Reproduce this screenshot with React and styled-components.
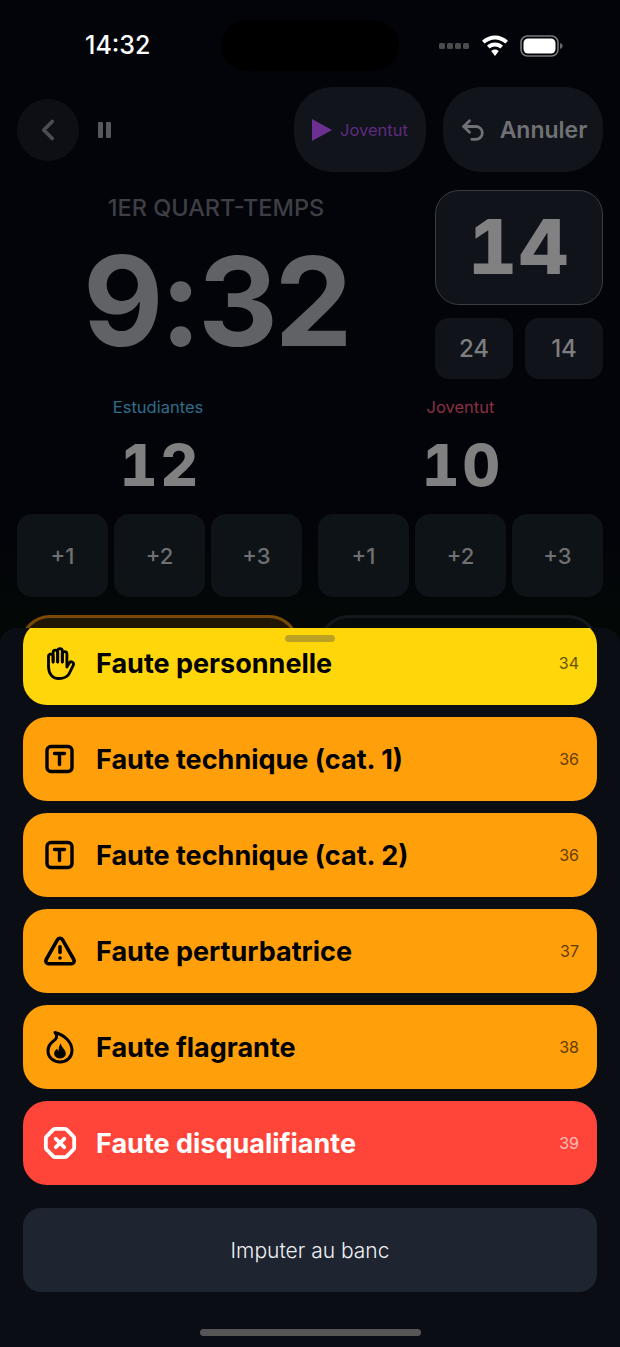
import React from "react";
import styled, { createGlobalStyle } from "styled-components";
import { ChevronLeft, OctagonX, TriangleAlert, Undo2 } from "lucide-react";

const GlobalStyle = createGlobalStyle`
  html, body { margin: 0; padding: 0; background: #030409; }
  * { box-sizing: border-box; }
`;

const Screen = styled.div`
  position: relative;
  width: 620px;
  height: 1347px;
  overflow: hidden;
  font-family: Inter, "Liberation Sans", sans-serif;
  background: linear-gradient(180deg, #030409 0, #030409 540px, #030806 628px);
`;

const StatusBar = styled.div`
  display: flex;
  align-items: center;
  height: 51px;
  margin-top: 20px;
  padding: 0 57px 0 85px;
`;

const Time = styled.div`
  width: 136px;
  color: #fff;
  font-size: 25px;
  font-weight: 500;
  line-height: 51px;
`;

const Island = styled.div`
  width: 178px;
  height: 51px;
  border-radius: 26px;
  background: #000;
`;

const StatusIcons = styled.div`
  display: flex;
  align-items: center;
  margin-left: auto;
  gap: 11px;
`;

const Toolbar = styled.div`
  display: flex;
  align-items: center;
  height: 85px;
  margin-top: 16px;
  padding: 0 17px;
`;

const BackButton = styled.div`
  display: flex;
  align-items: center;
  justify-content: center;
  width: 62px;
  height: 62px;
  border-radius: 50%;
  background: #0d0f14;
  color: #4a4d53;
`;

const PauseIcon = styled.div`
  display: flex;
  gap: 3px;
  margin-left: 19px;
  margin-right: auto;
`;

const PauseBar = styled.span`
  width: 5px;
  height: 16px;
  border-radius: 1px;
  background: #55585e;
`;

const Pill = styled.div`
  display: flex;
  align-items: center;
  justify-content: center;
  gap: ${(p) => p.$gap}px;
  width: ${(p) => p.$width}px;
  height: 85px;
  margin-left: ${(p) => p.$left}px;
  border-radius: 38px;
  background: #11141b;
  color: ${(p) => p.$color};
  font-size: ${(p) => p.$size}px;
  font-weight: ${(p) => p.$weight};
`;

const ClockRow = styled.div`
  display: flex;
  margin-top: 18px;
  padding: 0 17px;
`;

const ClockColumn = styled.div`
  flex: 1;
  display: flex;
  flex-direction: column;
  align-items: center;
  padding-right: 20px;
`;

const Period = styled.div`
  margin-top: 4px;
  color: #3d3f45;
  font-size: 23.5px;
  font-weight: 500;
  line-height: 28px;
`;

const Clock = styled.div`
  margin-top: 16px;
  color: #606265;
  font-size: 124px;
  font-weight: 700;
  line-height: 126px;
  letter-spacing: -3.5px;
`;

const ShotColumn = styled.div`
  display: flex;
  flex-direction: column;
  gap: 13px;
  width: 168px;
`;

const ShotBox = styled.div`
  display: flex;
  align-items: center;
  justify-content: center;
  height: 115px;
  padding-bottom: 4px;
  border: 1.5px solid #3a3c42;
  border-radius: 24px;
  background: #10131a;
  color: #818181;
  font-size: 76px;
  font-weight: 800;
  font-variant-numeric: tabular-nums;
  letter-spacing: 2px;
`;

const ShotPresets = styled.div`
  display: flex;
  gap: 12px;
`;

const Preset = styled.div`
  flex: 1;
  display: flex;
  align-items: center;
  justify-content: center;
  height: 61px;
  border-radius: 14px;
  background: #10131a;
  color: #7d7e80;
  font-size: 24px;
  font-weight: 500;
`;

const Teams = styled.div`
  display: grid;
  grid-template-columns: 285px 285px;
  justify-content: space-between;
  margin-top: 17px;
  padding: 0 17px;
`;

const Team = styled.div`
  display: flex;
  flex-direction: column;
`;

const TeamName = styled.div`
  height: 22px;
  padding-right: ${(p) => p.$shift}px;
  color: ${(p) => p.$color};
  font-size: 16.5px;
  line-height: 22px;
  text-align: center;
`;

const Score = styled.div`
  margin-top: 14px;
  padding-left: ${(p) => p.$nudge}px;
  color: #808080;
  font-size: 58px;
  font-weight: 800;
  font-variant-numeric: tabular-nums;
  letter-spacing: 3px;
  line-height: 66px;
  text-align: center;
`;

const ScoreButtons = styled.div`
  display: grid;
  grid-template-columns: repeat(3, 1fr);
  gap: 6px;
  margin-top: 16px;
`;

const ScoreButton = styled.div`
  display: flex;
  align-items: center;
  justify-content: center;
  height: 83px;
  border-radius: 15px;
  background: #0e1317;
  color: #6e7072;
  font-size: 22px;
  font-weight: 500;
`;

const FoulCards = styled.div`
  display: grid;
  grid-template-columns: 279px 279px;
  justify-content: space-between;
  margin-top: 18px;
  padding: 0 22px 0 20px;
`;

const FoulCard = styled.div`
  height: 90px;
  border: 3px solid ${(p) => p.$border};
  border-radius: 30px;
  background: ${(p) => p.$bg};
`;

const Sheet = styled.div`
  position: absolute;
  left: 0;
  right: 0;
  bottom: 0;
  height: 719px;
  overflow: hidden;
  border-radius: 16px 16px 0 0;
  background: #0b0d14;
`;

const Handle = styled.div`
  position: absolute;
  top: 7px;
  left: 285px;
  width: 50px;
  height: 7px;
  border-radius: 4px;
  background: rgba(80, 80, 80, 0.38);
`;

const FaultList = styled.div`
  display: flex;
  flex-direction: column;
  gap: 12px;
  margin-top: -7px;
  padding: 0 23px;
`;

const Fault = styled.div`
  display: flex;
  align-items: center;
  height: 84px;
  padding: 0 18px 0 20px;
  border-radius: 24px;
  background: ${(p) => p.$bg};
  color: ${(p) => p.$fg};
`;

const FaultIcon = styled.div`
  display: flex;
  align-items: center;
  justify-content: center;
  width: 34px;
  height: 34px;
  margin-right: 19px;
`;

const FaultLabel = styled.div`
  flex: 1;
  font-size: 27px;
  font-weight: 700;
`;

const FaultCode = styled.div`
  font-size: 16px;
  opacity: 0.62;
`;

const BenchButton = styled.div`
  display: flex;
  align-items: center;
  justify-content: center;
  height: 84px;
  margin: 23px 23px 0;
  border-radius: 18px;
  background: #1e2430;
  color: #f0f1f3;
  font-size: 21px;
  font-weight: 300;
`;

const HomeIndicator = styled.div`
  position: absolute;
  left: 200px;
  bottom: 11px;
  width: 221px;
  height: 7px;
  border-radius: 4px;
  background: #565656;
`;

const WifiIcon = () => (
  <svg width="28" height="22" viewBox="0 0 28 22">
    <path fill="#fff" d="M14 0.5C9 0.5 4.5 2.5 1 5.8l2.6 2.8C6.4 6 10 4.4 14 4.4s7.6 1.6 10.4 4.2L27 5.8C23.5 2.5 19 .5 14 .5z" />
    <path fill="#fff" d="M14 7.6c-3 0-5.8 1.2-8 3.2l2.7 2.8c1.4-1.3 3.3-2.1 5.3-2.1s3.9.8 5.3 2.1l2.7-2.8c-2.2-2-5-3.2-8-3.2z" />
    <path fill="#fff" d="M14 14.6c-1.5 0-2.8.6-3.8 1.5L14 21l3.8-4.9c-1-.9-2.3-1.5-3.8-1.5z" />
  </svg>
);

const BatteryIcon = () => (
  <svg width="43" height="24" viewBox="0 0 43 24">
    <rect x="1" y="2" width="37" height="20" rx="6.5" fill="none" stroke="#777" strokeWidth="1.6" />
    <rect x="3.5" y="4.5" width="32" height="15" rx="4.5" fill="#fff" />
    <path d="M40 9c1.6.4 2.6 1.6 2.6 3s-1 2.6-2.6 3z" fill="#666" />
  </svg>
);

const SignalDots = () => (
  <svg width="31" height="8" viewBox="0 0 31 8">
    {[0, 8, 16, 24].map((x) => (
      <rect key={x} x={x} y="1" width="6" height="6" rx="1.5" fill="#4b4b4e" />
    ))}
  </svg>
);

const HandIcon = () => (
  <svg width="32" height="34" viewBox="0 0 32 34" fill="none" stroke="currentColor" strokeWidth="2.8" strokeLinecap="round" strokeLinejoin="round">
    <path d="M4.5 20V10.5a2.3 2.3 0 0 1 4.6 0V16" />
    <path d="M9.1 16V6.5a2.3 2.3 0 0 1 4.6 0V16" />
    <path d="M13.7 16V5a2.3 2.3 0 0 1 4.6 0V16" />
    <path d="M18.3 16V8a2.3 2.3 0 0 1 4.6 0V21l2.3-4a2.3 2.3 0 0 1 4 2.3L25 28C23 31 20 32.5 15 32.5 8 32.5 4.5 27.5 4.5 20" />
  </svg>
);

const TechIcon = () => (
  <svg width="32" height="32" viewBox="0 0 32 32" fill="none" stroke="currentColor" strokeWidth="3.4" strokeLinecap="round" strokeLinejoin="round">
    <rect x="3" y="3.5" width="25" height="25" rx="4" />
    <path d="M10.5 10.5h10M15.5 10.5v11" />
  </svg>
);

const FlameIcon = () => (
  <svg width="32" height="34" viewBox="0 0 32 34" fill="none" stroke="currentColor" strokeWidth="3" strokeLinecap="round" strokeLinejoin="round">
    <path d="M11 2.5C14 6 12.5 9 9.500 11 6 13.500 4 16.500 4 21 4 27.500 9.500 32 16 32 23 32 28 27 28 20.500 28 12 20.500 5 11 2.5z" />
    <path fill="currentColor" strokeWidth="1" d="M16.5 14.500c.4 3 4.800 5 4.800 9 0 3-2.300 4.500-5.300 4.500s-5.300-1.500-5.300-4.500c0-2 1-3.300 2.200-4.200.2 1.300.9 2 1.800 2.200.6-2.200.6-5 1.800-7z" />
  </svg>
);

const faults = [
  { label: "Faute personnelle", code: 34, bg: "#ffd60a", fg: "#000", icon: <HandIcon /> },
  { label: "Faute technique (cat. 1)", code: 36, bg: "#ff9f0a", fg: "#000", icon: <TechIcon /> },
  { label: "Faute technique (cat. 2)", code: 36, bg: "#ff9f0a", fg: "#000", icon: <TechIcon /> },
  { label: "Faute perturbatrice", code: 37, bg: "#ff9f0a", fg: "#000", icon: <TriangleAlert size={34} strokeWidth={2.5} /> },
  { label: "Faute flagrante", code: 38, bg: "#ff9f0a", fg: "#000", icon: <FlameIcon /> },
  { label: "Faute disqualifiante", code: 39, bg: "#ff453a", fg: "#fff", icon: <OctagonX size={34} strokeWidth={2.7} /> },
];

const teams = [
  { name: "Estudiantes", color: "#2f6d88", score: 12, shift: 3, nudge: 2 },
  { name: "Joventut", color: "#8b2f43", score: 10, shift: 0, nudge: 4 },
];

export default function App() {
  return (
    <Screen>
      <GlobalStyle />
      <StatusBar>
        <Time>14:32</Time>
        <Island />
        <StatusIcons>
          <SignalDots />
          <WifiIcon />
          <BatteryIcon />
        </StatusIcons>
      </StatusBar>

      <Toolbar>
        <BackButton>
          <ChevronLeft size={34} strokeWidth={2.6} />
        </BackButton>
        <PauseIcon>
          <PauseBar />
          <PauseBar />
        </PauseIcon>
        <Pill $width={132} $left={0} $gap={8} $color="#5e2b7f" $size={16.5} $weight={400}>
          <svg width="20" height="22" viewBox="0 0 20 22">
            <path d="M0 0L20 11L0 22z" fill="#6c3091" />
          </svg>
          Joventut
        </Pill>
        <Pill $width={160} $left={17} $gap={13} $color="#707174" $size={23} $weight={600}>
          <Undo2 size={28} strokeWidth={2.4} />
          Annuler
        </Pill>
      </Toolbar>

      <ClockRow>
        <ClockColumn>
          <Period>1ER QUART-TEMPS</Period>
          <Clock>9:32</Clock>
        </ClockColumn>
        <ShotColumn>
          <ShotBox>14</ShotBox>
          <ShotPresets>
            <Preset>24</Preset>
            <Preset>14</Preset>
          </ShotPresets>
        </ShotColumn>
      </ClockRow>

      <Teams>
        {teams.map((t) => (
          <Team key={t.name}>
            <TeamName $color={t.color} $shift={t.shift}>{t.name}</TeamName>
            <Score $nudge={t.nudge}>{t.score}</Score>
            <ScoreButtons>
              <ScoreButton>+1</ScoreButton>
              <ScoreButton>+2</ScoreButton>
              <ScoreButton>+3</ScoreButton>
            </ScoreButtons>
          </Team>
        ))}
      </Teams>

      <FoulCards>
        <FoulCard $border="#7a4a05" $bg="#211503" />
        <FoulCard $border="#14181c" $bg="#060a0a" />
      </FoulCards>

      <Sheet>
        <FaultList>
          {faults.map((f) => (
            <Fault key={f.label} $bg={f.bg} $fg={f.fg}>
              <FaultIcon>{f.icon}</FaultIcon>
              <FaultLabel>{f.label}</FaultLabel>
              <FaultCode>{f.code}</FaultCode>
            </Fault>
          ))}
        </FaultList>
        <BenchButton>Imputer au banc</BenchButton>
        <Handle />
      </Sheet>
      <HomeIndicator />
    </Screen>
  );
}
